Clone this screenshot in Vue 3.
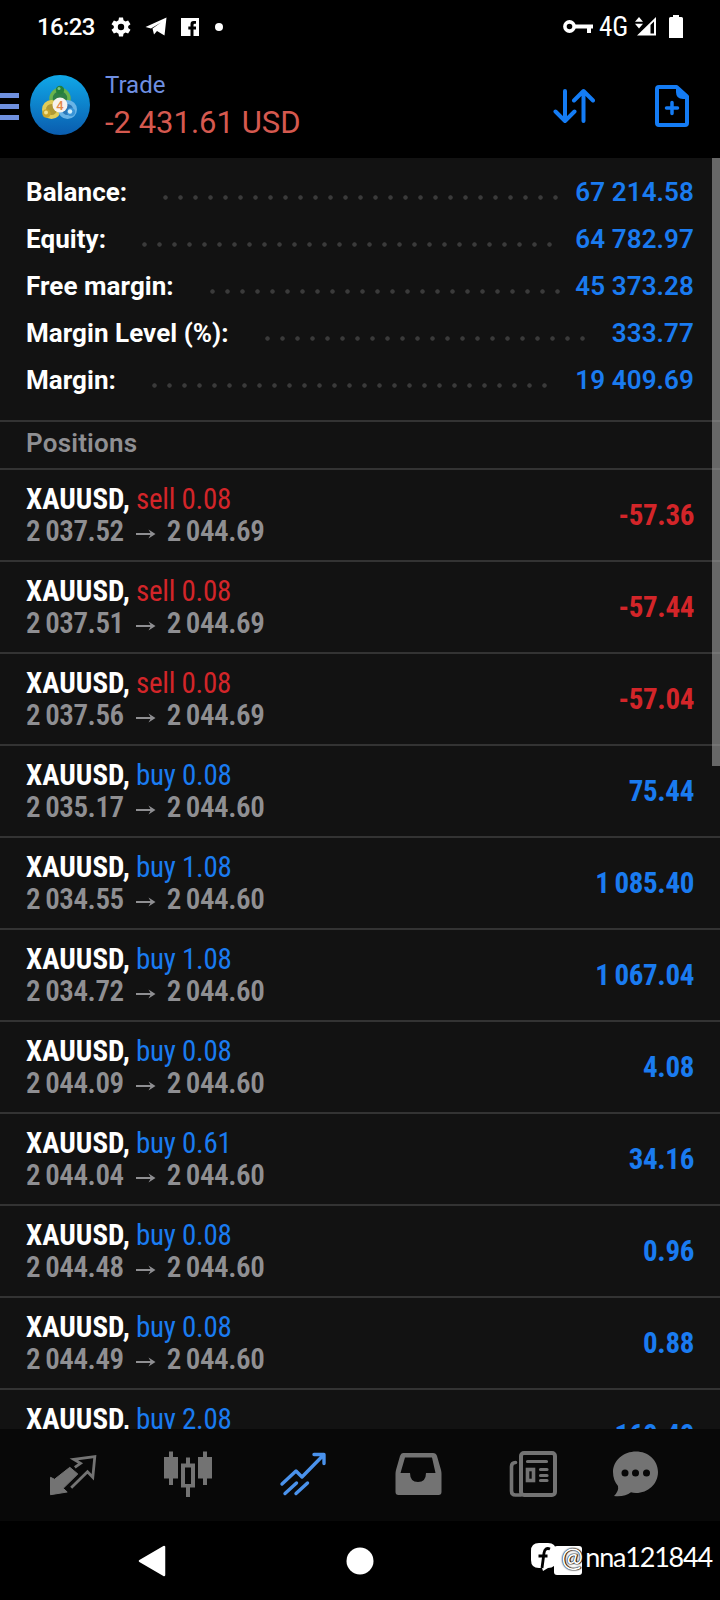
<script setup>
const stats = [
  { label: 'Balance:', value: '67 214.58', dots: 27 },
  { label: 'Equity:', value: '64 782.97', dots: 28 },
  { label: 'Free margin:', value: '45 373.28', dots: 24 },
  { label: 'Margin Level (%):', value: '333.77', dots: 22 },
  { label: 'Margin:', value: '19 409.69', dots: 27 },
]

const positions = [
  { side: 'sell', lots: '0.08', open: '2 037.52', now: '2 044.69', profit: '-57.36' },
  { side: 'sell', lots: '0.08', open: '2 037.51', now: '2 044.69', profit: '-57.44' },
  { side: 'sell', lots: '0.08', open: '2 037.56', now: '2 044.69', profit: '-57.04' },
  { side: 'buy', lots: '0.08', open: '2 035.17', now: '2 044.60', profit: '75.44' },
  { side: 'buy', lots: '1.08', open: '2 034.55', now: '2 044.60', profit: '1 085.40' },
  { side: 'buy', lots: '1.08', open: '2 034.72', now: '2 044.60', profit: '1 067.04' },
  { side: 'buy', lots: '0.08', open: '2 044.09', now: '2 044.60', profit: '4.08' },
  { side: 'buy', lots: '0.61', open: '2 044.04', now: '2 044.60', profit: '34.16' },
  { side: 'buy', lots: '0.08', open: '2 044.48', now: '2 044.60', profit: '0.96' },
  { side: 'buy', lots: '0.08', open: '2 044.49', now: '2 044.60', profit: '0.88' },
  { side: 'buy', lots: '2.08', open: '2 044.52', now: '2 044.60', profit: '160.40' },
]
</script>

<template>
  <div class="screen">
    <!-- ── Status bar ── -->
    <div class="status">
      <span class="status__time">16:23</span>
      <svg class="status__gear" width="20" height="20" viewBox="0 0 20 20">
        <path d="M8 .5h4l.5 2.800 2 1.100 2.600-1 2.400 3.800-2.300 1.800v2l2.300 1.800-2.400 3.800-2.600-1-2 1.100-.5 2.800H8l-.5-2.800-2-1.100-2.600 1L.5 12.800 2.800 11V9L.5 7.200l2.400-3.800 2.600 1 2-1.100zM10 6.800a3.200 3.200 0 1 0 0 6.400 3.200 3.200 0 0 0 0-6.400z" fill="#fff" fill-rule="evenodd" />
      </svg>
      <svg class="status__plane" width="22" height="19" viewBox="0 0 22 19">
        <path d="M.5 10 21.500.5 19.500 18.500 12 14l-3 3.500-1.500-6L16 5.500 6 11.500z" fill="#fff" />
      </svg>
      <svg class="status__fb" width="18" height="18" viewBox="0 0 18 18">
        <path d="M0 0h18v18h-5.500v-6.500H15V8.500h-2.500V7q0-1.300 1.300-1.300H15V3h-2.500Q9.500 3 9.500 6v2.500H7.300v3h2.200V18H0z" fill="#fff" />
      </svg>
      <span class="status__dot" />
      <div class="status__right">
        <svg width="30" height="16" viewBox="0 0 30 16">
          <circle cx="6.500" cy="7.500" r="4.600" fill="none" stroke="#fff" stroke-width="3.600" />
          <path d="M11 5.500h19v4h-2v4.500h-4V9.500H11z" fill="#fff" />
        </svg>
        <span class="status__net">4G</span>
        <svg class="status__signal" width="21" height="19" viewBox="0 0 21 19">
          <path d="M4 0l4 4.700H0zM4 11.500l4-4.700H0zM21 0v18.500H2z" fill="#fff" />
          <path d="M15.500 8l3.500-3.500v12h-3.500z" fill="#000" />
        </svg>
        <svg width="14" height="23" viewBox="0 0 14 23">
          <path d="M4 0h6v2h2.500Q14 2 14 3.500V23H0V3.500Q0 2 1.500 2H4z" fill="#fff" />
        </svg>
      </div>
    </div>

    <!-- ── App header ── -->
    <header class="header">
      <div class="burger"><i /><i /><i /></div>
      <svg class="logo" width="60" height="60" viewBox="0 0 60 60">
        <defs>
          <linearGradient id="sky" x1="0" y1="0" x2="0" y2="1">
            <stop offset="0" stop-color="#10a8e8" />
            <stop offset="1" stop-color="#0a5cae" />
          </linearGradient>
        </defs>
        <circle cx="30" cy="30" r="30" fill="url(#sky)" />
        <circle cx="30" cy="23.500" r="9" fill="#2d7f46" stroke="#69b34c" stroke-width="3.500" />
        <circle cx="21.500" cy="34.500" r="7.500" fill="#b09a34" stroke="#e0cc58" stroke-width="4" />
        <circle cx="37.500" cy="34.500" r="7.500" fill="#2a77b8" stroke="#69b4e6" stroke-width="4" />
        <circle cx="30" cy="15" r="4.200" fill="#23803a" />
        <circle cx="29" cy="13.500" r="1.500" fill="#7cc684" />
        <circle cx="16.500" cy="38.500" r="4.200" fill="#c9a52c" />
        <circle cx="16" cy="37.500" r="2" fill="#f3e38d" />
        <circle cx="41" cy="37" r="4.200" fill="#3a95d8" />
        <circle cx="40" cy="36.500" r="2.200" fill="#d4effa" />
        <circle cx="30" cy="30" r="7.500" fill="#f7f3ee" />
        <text x="30" y="34.800" text-anchor="middle" class="logo__num">4</text>
      </svg>
      <div class="header__titles">
        <div class="header__name">Trade</div>
        <div class="header__sum">-2 431.61 USD</div>
      </div>
      <svg class="header__sort" width="42" height="36" viewBox="0 0 42 36" fill="none" stroke="#147cf5" stroke-width="4" stroke-linecap="round" stroke-linejoin="round">
        <path d="M12 3v30M2.500 23.500 12 33l9.500-9.500M30.500 33V3M21 12.500 30.500 3 40 12.500" />
      </svg>
      <svg width="34" height="42" viewBox="0 0 34 42">
        <path d="M4 2h17.500L32 11.500V38q0 2-2 2H4q-2 0-2-2V4q0-2 2-2z" fill="none" stroke="#147cf5" stroke-width="4" stroke-linejoin="round" />
        <path d="M21 1l12.500 11v2H28q-7 0-7-7z" fill="#147cf5" />
        <path d="M17 17.500v11M11.500 23h11" stroke="#147cf5" stroke-width="3.500" stroke-linecap="round" />
      </svg>
    </header>

    <!-- ── Account figures and positions ── -->
    <main class="list">
      <div class="stats">
        <div v-for="s in stats" :key="s.label" class="stat">
          <span class="stat__label">{{ s.label }}</span>
          <span class="stat__dots" :style="{ width: s.dots * 15 + 'px' }" />
          <span class="stat__value">{{ s.value }}</span>
        </div>
      </div>
      <div class="section">Positions</div>
      <div v-for="(p, i) in positions" :key="i" class="pos" :class="`pos--${p.side}`">
        <div class="pos__info">
          <div class="pos__line"><b>XAUUSD,</b> <span class="pos__side">{{ p.side }} {{ p.lots }}</span></div>
          <div class="pos__line pos__line--prices">
            <span>{{ p.open }}</span>
            <svg class="pos__arrow" width="20" height="12" viewBox="0 0 20 12">
              <path d="M0 6h17" stroke="#8f8f92" stroke-width="2" />
              <path d="M12.500 1.500 19.500 6l-7 4.500L15 6z" fill="#8f8f92" />
            </svg>
            <span>{{ p.now }}</span>
          </div>
        </div>
        <div class="pos__profit">{{ p.profit }}</div>
      </div>
      <div class="scrollbar" />
    </main>

    <!-- ── Tabs ── -->
    <nav class="tabs">
      <svg width="48" height="48" viewBox="0 0 48 48">
        <path d="M1.500 26.300 5.500 28.300 20.800 16.300l8 6.700L14.200 37.300l4 3.700-16.700 2.700z" fill="#737373" stroke="#737373" stroke-linejoin="round" />
        <path d="M25.800 16.300l5.700-4-6.700-4 21-2.600-2 20.600-5.300-5.600L22.200 36.700" fill="none" stroke="#737373" stroke-width="2.800" />
      </svg>
      <svg width="48" height="48" viewBox="0 0 48 48" fill="#737373">
        <path d="M5 .5h4V6h5v21.500H9V34H5v-6.500H0V6h5zM39 .5h4V6h5v21.500h-5V34h-4v-6.500h-5V6h5z" />
        <path d="M22 6.500h4v6h5v24h-5V46h-4v-9.500h-5v-24h5zM21 16.500V33h6V16.500z" fill-rule="evenodd" />
      </svg>
      <svg width="48" height="48" viewBox="0 0 48 48" fill="none" stroke="#4a92ec" stroke-width="3.400" stroke-linecap="round" stroke-linejoin="round">
        <path d="M3 33 17 20l6 6L44.500 4M35 3.500h10v9M6 42.500 17.500 32M17 42.500 28.500 32" />
      </svg>
      <svg width="48" height="48" viewBox="0 0 48 48">
        <path d="M9 2h30q3 0 4 3l4 14q.5 2 .5 4v18q0 3-3 3H4.500q-3 0-3-3V23q0-2 .5-4L6 5q1-3 3-3zM11 6.500 6.500 22H16q0 9 8 9t8-9h9.500L38 6.500z" fill="#737373" fill-rule="evenodd" />
      </svg>
      <svg width="48" height="48" viewBox="0 0 48 48" fill="none" stroke="#737373">
        <rect x="12" y="2" width="34" height="42" rx="3" stroke-width="4" />
        <path d="M6.500 11.500q-4 0-4 4V40q0 4 4 4H12" stroke-width="3.600" stroke-linecap="round" />
        <path d="M18.500 10.500h19M31.500 18.500h6.500M31.500 24.500h6.500M31.500 29.500h6.500" stroke-width="3.200" stroke-linecap="round" />
        <rect x="18.500" y="18.500" width="6" height="11" stroke-width="3.600" />
      </svg>
      <svg width="48" height="48" viewBox="0 0 48 48">
        <path d="M24 .5C36 .5 46 9 46 21S36 42 24 42q-3 0-5-.7Q13 46 2 45q5-5 4-10-5-6-5-14C1 9 12 .5 24 .5z" fill="#737373" />
        <circle cx="13" cy="22" r="3.500" fill="#080808" />
        <circle cx="23.500" cy="22" r="3.500" fill="#080808" />
        <circle cx="34.500" cy="22" r="3.500" fill="#080808" />
      </svg>
    </nav>

    <!-- ── System navigation ── -->
    <div class="sysnav">
      <svg width="28" height="32" viewBox="0 0 28 32">
        <path d="M2 16 26 2v28z" fill="#fff" stroke="#fff" stroke-width="2.500" stroke-linejoin="round" />
      </svg>
      <svg width="28" height="28" viewBox="0 0 28 28"><circle cx="14" cy="14" r="13.500" fill="#fff" /></svg>
      <svg width="28" height="29" viewBox="0 0 28 29"><rect width="28" height="29" rx="3" fill="#fff" /></svg>
      <div class="mark">
        <svg width="25" height="28" viewBox="0 0 25 28">
          <path d="M8 0h9q8 0 8 8v9q0 8-8 8l-5 3-1-3H8q-8 0-8-8V8q0-8 8-8z" fill="#fff" />
          <path d="M19 6q-5-2-6 4l-2 15M7.500 13h9" fill="none" stroke="#000" stroke-width="2.800" />
        </svg>
        <span class="mark__at">@</span><span class="mark__name">nna121844</span>
      </div>
    </div>
  </div>
</template>

<style>
body {
  margin: 0;
  background: #000;
}
</style>

<style scoped>
.screen {
  display: flex;
  flex-direction: column;
  width: 720px;
  height: 1600px;
  overflow: hidden;
  background: #000;
  color: #fff;
  font-family: Roboto, "Liberation Sans", sans-serif;
}
svg { display: block; flex: none; }

/* ── Status bar ── */
.status {
  display: flex;
  align-items: center;
  height: 53px;
  padding: 0 37px;
  box-sizing: border-box;
}
.status__time { width: 74px; font-size: 24px; font-weight: 500; letter-spacing: -0.6px; }
.status__plane { margin-left: 14px; }
.status__fb { margin-left: 14px; }
.status__dot {
  width: 8px;
  height: 8px;
  margin-left: 16px;
  border-radius: 50%;
  background: #fff;
}
.status__right {
  display: flex;
  align-items: center;
  margin-left: auto;
  margin-right: 0;
}
.status__net {
  width: 28px;
  margin: 0 8px 0 6px;
  font-size: 27px;
  font-weight: 450;
  font-stretch: 75%;
}
.status__signal { margin-right: 13px; }

/* ── Header ── */
.header {
  display: flex;
  align-items: center;
  height: 105px;
  padding-right: 31px;
}
.burger { display: flex; flex-direction: column; gap: 6px; width: 19px; margin: 2px 11px 0 0; }
.burger i { height: 5px; background: #6f90de; }
.logo { margin-top: -1px; }
.logo__num { font-size: 13px; font-weight: 500; fill: #e58a4a; }
.header__titles { margin: 0 auto 0 15px; }
.header__name { font-size: 24px; line-height: 34px; color: #6f8fe2; }
.header__sum { font-size: 31px; line-height: 42px; color: #d5594f; }
.header__sort { margin-right: 60px; }

/* ── List ── */
.list {
  position: relative;
  height: 1271px;
  overflow: hidden;
  background: #121212;
}
.stats { padding: 10px 26px 17px; }
.stat {
  display: flex;
  align-items: center;
  height: 47px;
  font-size: 26px;
}
.stat__label { font-weight: 700; letter-spacing: 0.05px; }
.stat__dots {
  height: 5px;
  margin: 12px 0 0 31px;
  background: radial-gradient(circle at 7.5px 2.5px, #3a3a3a 1.8px, transparent 2.6px) 0 0 / 15px 5px;
}
.stat__value { margin-left: auto; font-weight: 640; letter-spacing: 0.1px; color: #1a7bf0; }
.section {
  height: 46px;
  border-top: 2px solid #333;
  border-bottom: 2px solid #333;
  padding-left: 26px;
  font-size: 26px;
  font-weight: 600;
  line-height: 43px;
  letter-spacing: 0.2px;
  color: #8f8f92;
}
.pos {
  display: flex;
  align-items: center;
  justify-content: space-between;
  height: 90px;
  padding: 0 26px;
  border-bottom: 2px solid #333;
  font-size: 29px;
  font-stretch: 75%;
}
.pos__line { line-height: 32px; white-space: nowrap; }
.pos__line b { font-weight: 700; }
.pos__side { margin-left: -0.5px; letter-spacing: -0.25px; }
.pos__line--prices {
  display: flex;
  align-items: center;
  font-weight: 640;
  letter-spacing: -0.45px;
  word-spacing: -1.2px;
  color: #8f8f92;
}
.pos__arrow { margin: 6px 11px 0 12px; }
.pos__profit { font-weight: 680; letter-spacing: -0.35px; word-spacing: -1.6px; }
.pos--sell .pos__side,
.pos--sell .pos__profit { color: #d32529; }
.pos--buy .pos__side,
.pos--buy .pos__profit { color: #1a7bf0; }
.scrollbar {
  position: absolute;
  top: 0;
  right: 0;
  width: 8px;
  height: 608px;
  background: rgba(160, 160, 160, 0.6);
}

/* ── Tabs ── */
.tabs {
  display: grid;
  grid-template-columns: repeat(5, 115px) 92px;
  justify-items: center;
  align-items: center;
  height: 92px;
  padding-left: 15px;
  background: #080808;
}

/* ── System navigation ── */
.sysnav {
  position: relative;
  display: grid;
  grid-template-columns: repeat(3, 208px);
  justify-content: center;
  justify-items: center;
  align-items: center;
  height: 79px;
}
.mark {
  position: absolute;
  top: 19px;
  right: 8px;
  display: flex;
  align-items: center;
  font-family: Lato, sans-serif;
  font-size: 27px;
}
.mark__at {
  width: 22px;
  margin: 0 2px 0 5px;
  font-size: 26px;
  letter-spacing: -1px;
  text-shadow: 0 0 2px #000, 0 0 1px #000, 1px 0 1px #000;
}
.mark__name { letter-spacing: -1.2px; }
</style>
